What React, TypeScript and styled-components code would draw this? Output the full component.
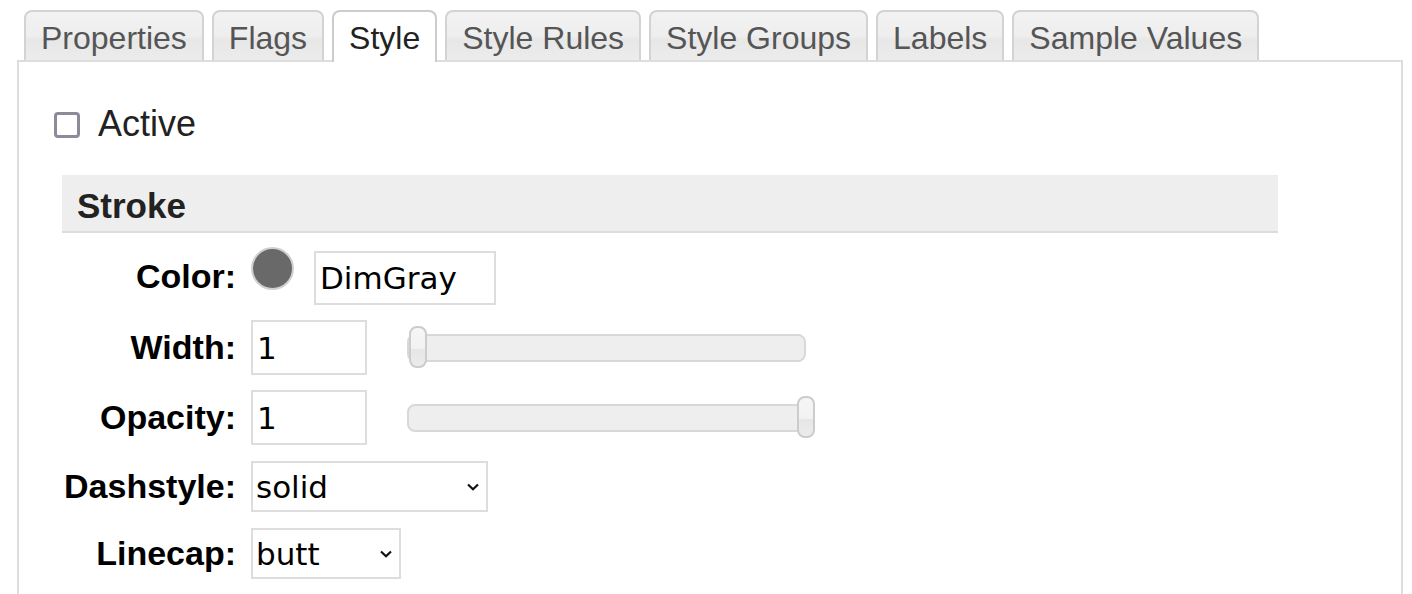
import React from "react";
import styled, { createGlobalStyle, css } from "styled-components";

const Global = createGlobalStyle`
  html, body { margin: 0; padding: 0; background: #fff; overflow: hidden; }
  body { font-family: "Liberation Sans", Arial, sans-serif; }
  * { box-sizing: border-box; }
`;

const Page = styled.div`
  padding: 10px 0 0 17px;
  width: 1412px;
  height: 594px;
  overflow: hidden;
`;

const TabBar = styled.div`
  display: flex;
  gap: 8px;
  padding-left: 7px;
  position: relative;
  z-index: 1;
`;

const Tab = styled.div<{ $active?: boolean }>`
  height: 50px;
  padding: 4px 15px 0;
  line-height: 44px;
  font-size: 32px;
  color: #555;
  border: 2px solid #d3d3d3;
  border-bottom: none;
  border-radius: 8px 8px 0 0;
  background: linear-gradient(to bottom, #f2f2f2 0%, #eeeeee 50%, #e7e7e7 58%, #ececec 100%);
  white-space: nowrap;
  ${(p) =>
    p.$active &&
    css`
      height: 52px;
      margin-bottom: -2px;
      background: #fff;
      color: #222;
      border-color: #cccccc;
    `}
`;

const Panel = styled.div`
  width: 1386px;
  min-height: 600px;
  border: 2px solid #ddd;
  border-bottom: none;
  padding: 44px 0 0 35px;
`;

const ActiveRow = styled.label`
  display: flex;
  align-items: center;
  gap: 18px;
  height: 36px;
  font-size: 36px;
  color: #222;
`;

const CheckBox = styled.span`
  width: 26px;
  height: 26px;
  border: 3px solid #8d8b99;
  border-radius: 4px;
  background: #fff;
  margin-top: 2px;
`;

const Section = styled.div`
  margin: 33px 0 0 8px;
  width: 1216px;
`;

const SectionHeader = styled.div`
  height: 58px;
  line-height: 56px;
  padding: 3px 0 0 15px;
  background: #eeeeee;
  border-bottom: 2px solid #dddddd;
  font-size: 35px;
  font-weight: bold;
  color: #222;
`;

const Form = styled.div`
  margin-top: 14px;
  display: flex;
  flex-direction: column;
  gap: 15px;
`;

const Row = styled.div<{ $shift?: number }>`
  display: flex;
  align-items: center;
  gap: 15px;
  margin-top: ${(p) => p.$shift ?? 0}px;
`;

const Label = styled.div`
  width: 174px;
  text-align: right;
  font-size: 34px;
  font-weight: bold;
  color: #000;
  white-space: nowrap;
`;

const Controls = styled.div`
  display: flex;
  align-items: flex-start;
  gap: 20px;
`;

const Swatch = styled.span<{ $color: string }>`
  width: 43px;
  height: 43px;
  border-radius: 50%;
  background: ${(p) => p.$color};
  border: 2px solid #d0d0d0;
`;

const TextInput = styled.input<{ $w: number; $h?: number; $top?: number }>`
  width: ${(p) => p.$w}px;
  height: ${(p) => p.$h ?? 55}px;
  margin-top: ${(p) => p.$top ?? 0}px;
  border: 2px solid #ddd;
  padding: 0 4px;
  font-family: "DejaVu Sans", Verdana, sans-serif;
  font-size: 31px;
  color: #000;
  background: #fff;
  outline: none;
`;

const SliderTrack = styled.div`
  position: relative;
  width: 399px;
  height: 28px;
  margin-left: 25px;
  border: 2px solid #d8d8d8;
  border-radius: 8px;
  background: #eeeeee;
`;

const SliderHandle = styled.span`
  position: absolute;
  top: -10px;
  width: 18px;
  height: 42px;
  margin-left: -7px;
  border: 2px solid #cccccc;
  border-radius: 8px;
  background: linear-gradient(to bottom, #f6f6f6 0%, #f2f2f2 55%, #e6e6e6 56%, #ececec 100%);
`;

const SelectWrap = styled.div`
  position: relative;
  display: inline-flex;
`;

const Select = styled.select<{ $w: number }>`
  appearance: none;
  -webkit-appearance: none;
  width: ${(p) => p.$w}px;
  height: 51px;
  border: 2px solid #ddd;
  border-radius: 0;
  padding: 0 3px;
  background: #fff;
  font-family: "DejaVu Sans", Verdana, sans-serif;
  font-size: 31px;
  color: #000;
  outline: none;
`;

const Chevron = styled.svg`
  position: absolute;
  right: 9px;
  top: 50%;
  margin-top: -4px;
  width: 12px;
  height: 8px;
  pointer-events: none;
`;

const tabs = ["Properties", "Flags", "Style", "Style Rules", "Style Groups", "Labels", "Sample Values"];

function Slider({ pct }: { pct: number }) {
  return (
    <SliderTrack>
      <SliderHandle style={{ left: `${pct}%` }} />
    </SliderTrack>
  );
}

function Dropdown({ w, value, options }: { w: number; value: string; options: string[] }) {
  return (
    <SelectWrap>
      <Select $w={w} defaultValue={value}>
        {options.map((o) => (
          <option key={o}>{o}</option>
        ))}
      </Select>
      <Chevron viewBox="0 0 12 8">
        <path d="M1 1.5 L6 6.2 L11 1.5" fill="none" stroke="#111" strokeWidth="2.2" />
      </Chevron>
    </SelectWrap>
  );
}

export default function App() {
  return (
    <>
      <Global />
      <Page>
        <TabBar>
          {tabs.map((t) => (
            <Tab key={t} $active={t === "Style"}>
              {t}
            </Tab>
          ))}
        </TabBar>
        <Panel>
          <ActiveRow>
            <CheckBox />
            Active
          </ActiveRow>
          <Section>
            <SectionHeader>Stroke</SectionHeader>
            <Form>
              <Row>
                <Label>Color:</Label>
                <Controls>
                  <Swatch $color="#696969" />
                  <TextInput $w={182} $h={54} $top={4} defaultValue="DimGray" />
                </Controls>
              </Row>
              <Row>
                <Label>Width:</Label>
                <TextInput $w={116} defaultValue="1" />
                <Slider pct={1.8} />
              </Row>
              <Row>
                <Label>Opacity:</Label>
                <TextInput $w={116} defaultValue="1" />
                <Slider pct={100} />
              </Row>
              <Row $shift={1}>
                <Label>Dashstyle:</Label>
                <Dropdown w={237} value="solid" options={["solid", "dash", "dot"]} />
              </Row>
              <Row $shift={1}>
                <Label>Linecap:</Label>
                <Dropdown w={150} value="butt" options={["butt", "round", "square"]} />
              </Row>
            </Form>
          </Section>
        </Panel>
      </Page>
    </>
  );
}
